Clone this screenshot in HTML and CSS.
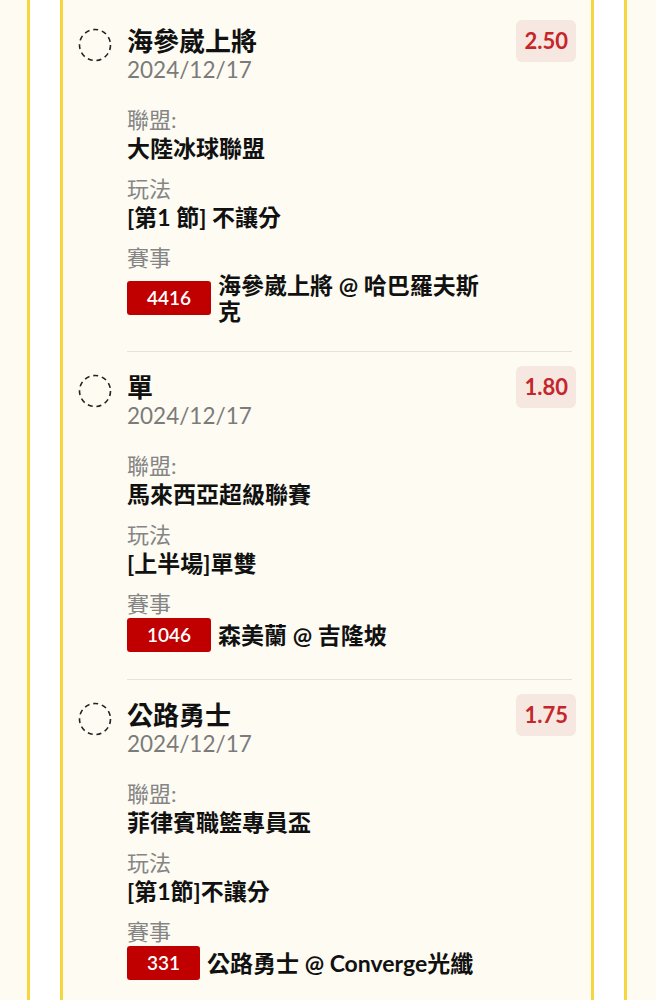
FILE: index.html
```html
<!DOCTYPE html>
<html lang="zh-Hant">
<head>
    <meta charset="UTF-8">
    <meta name="viewport" content="width=device-width, initial-scale=1.0">
    <title>注單</title>
    <link rel="stylesheet" href="styles.css">
</head>
<body>
    <div class="frame">
        <div class="list">

            <div class="item">
                <span class="check">
                    <svg width="34" height="34" viewBox="0 0 34 34"><circle cx="17" cy="17" r="15.5" fill="none" stroke="#222" stroke-width="1.6" stroke-dasharray="5 3.85"/></svg>
                </span>
                <div class="main">
                    <div class="info">
                        <div class="title">海參崴上將</div>
                        <div class="date">2024/12/17</div>
                        <div class="fields">
                            <div class="label">聯盟:</div>
                            <div class="value">大陸冰球聯盟</div>
                            <div class="label">玩法</div>
                            <div class="value">[第1 節] 不讓分</div>
                            <div class="label">賽事</div>
                            <div class="match">
                                <span class="code">4416</span>
                                <span class="teams">海參崴上將 @ 哈巴羅夫斯克</span>
                            </div>
                        </div>
                    </div>
                    <div class="odds">2.50</div>
                </div>
            </div>

            <div class="item">
                <span class="check">
                    <svg width="34" height="34" viewBox="0 0 34 34"><circle cx="17" cy="17" r="15.5" fill="none" stroke="#222" stroke-width="1.6" stroke-dasharray="5 3.85"/></svg>
                </span>
                <div class="main">
                    <div class="info">
                        <div class="title">單</div>
                        <div class="date">2024/12/17</div>
                        <div class="fields">
                            <div class="label">聯盟:</div>
                            <div class="value">馬來西亞超級聯賽</div>
                            <div class="label">玩法</div>
                            <div class="value">[上半場]單雙</div>
                            <div class="label">賽事</div>
                            <div class="match">
                                <span class="code">1046</span>
                                <span class="teams">森美蘭 @ 吉隆坡</span>
                            </div>
                        </div>
                    </div>
                    <div class="odds">1.80</div>
                </div>
            </div>

            <div class="item">
                <span class="check">
                    <svg width="34" height="34" viewBox="0 0 34 34"><circle cx="17" cy="17" r="15.5" fill="none" stroke="#222" stroke-width="1.6" stroke-dasharray="5 3.85"/></svg>
                </span>
                <div class="main">
                    <div class="info">
                        <div class="title">公路勇士</div>
                        <div class="date">2024/12/17</div>
                        <div class="fields">
                            <div class="label">聯盟:</div>
                            <div class="value">菲律賓職籃專員盃</div>
                            <div class="label">玩法</div>
                            <div class="value">[第1節]不讓分</div>
                            <div class="label">賽事</div>
                            <div class="match">
                                <span class="code">331</span>
                                <span class="teams">公路勇士 @ Converge光纖</span>
                            </div>
                        </div>
                    </div>
                    <div class="odds">1.75</div>
                </div>
            </div>

        </div>
    </div>
</body>
</html>
```

FILE: styles.css
```css
body {
    margin: 0;
    background-color: #fdfbf2;
    font-family: Lato, "Noto Sans CJK TC", sans-serif;
    color: #111;
}
.frame {
    margin: 0 29px 0 27px;
    padding: 0 30px;
    min-height: 1000px;
    background: #fff;
    border-left: 3px solid #f6d63e;
    border-right: 3px solid #f6d63e;
}
.list {
    min-height: 1000px;
    padding: 6px 19px 0 15px;
    background: #fdfbf2;
    border-left: 3px solid #f6d63e;
    border-right: 3px solid #f6d63e;
}
.item {
    display: flex;
    gap: 15px;
}
.check {
    flex: none;
    width: 34px;
    height: 34px;
    margin-top: 22px;
}
.check svg {
    display: block;
}
.main {
    flex: 1;
    display: flex;
    align-items: flex-start;
    padding: 14px 0 27px;
    border-bottom: 1px solid #e6e3da;
}
.info {
    flex: 1;
    margin-right: 20px;
}
.title {
    margin-top: 6px;
    font-size: 26px;
    font-weight: bold;
    line-height: 30px;
}
.date {
    font-size: 22.5px;
    line-height: 28px;
    color: #7b7b7b;
}
.fields {
    margin-top: 21px;
}
.label {
    font-size: 22px;
    line-height: 29px;
    color: #858585;
}
.value {
    font-size: 23px;
    font-weight: bold;
    line-height: 29px;
    margin-bottom: 11px;
}
.match {
    display: flex;
    align-items: center;
    gap: 7px;
}
.code {
    flex: none;
    padding: 0 20px;
    height: 34px;
    line-height: 34px;
    border-radius: 3px;
    background: #c00000;
    color: #fff;
    font-size: 19px;
    font-weight: 600;
}
.teams {
    font-size: 23px;
    font-weight: bold;
    line-height: 26px;
}
.odds {
    flex: none;
    margin-right: -4px;
    padding: 8px 8px;
    border-radius: 6px;
    background: #f6e7e0;
    color: #c4262b;
    font-size: 22px;
    font-weight: bold;
    line-height: 26px;
}
```
